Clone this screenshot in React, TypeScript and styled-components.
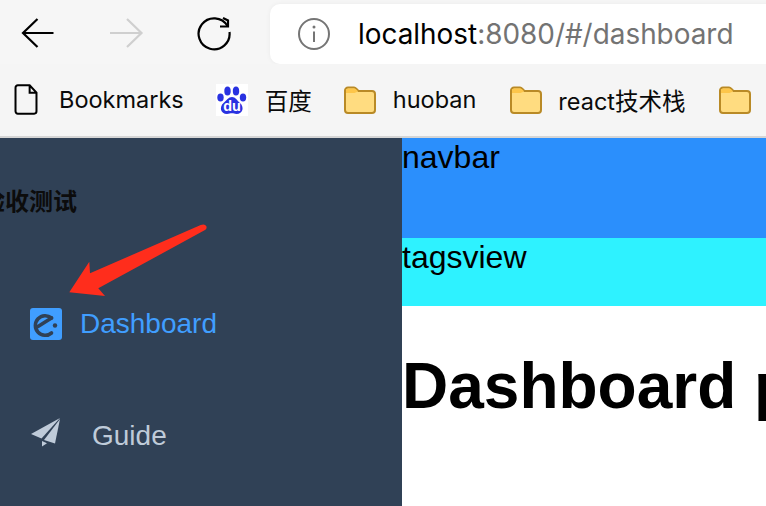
import React from 'react'
import styled, { createGlobalStyle } from 'styled-components'

const GlobalStyle = createGlobalStyle`
  html, body {
    margin: 0;
    padding: 0;
    width: 766px;
    height: 506px;
    overflow: hidden;
    background: #fff;
  }
  * {
    box-sizing: border-box;
  }
`

const Page = styled.div`
  position: relative;
  width: 766px;
  height: 506px;
  display: flex;
  flex-direction: column;
  overflow: hidden;
  font-family: 'Liberation Sans', Arial, 'Noto Sans CJK SC', sans-serif;
`

const Toolbar = styled.div`
  height: 64px;
  flex: none;
  display: flex;
  align-items: flex-start;
  padding-top: 4px;
  background: #f6f6f6;
`

const NavIcon = styled.svg<{ $left: number }>`
  flex: none;
  width: 36px;
  height: 36px;
  margin-top: 12px;
  margin-left: ${({ $left }) => $left}px;
`

const AddressBar = styled.div`
  flex: none;
  width: 520px;
  height: 60px;
  margin-left: 38px;
  display: flex;
  align-items: center;
  padding-left: 28px;
  background: #fff;
  border-radius: 10px 0 0 10px;
  box-shadow: 0 0 5px rgba(0, 0, 0, 0.05);
`

const Url = styled.span`
  margin-left: 28px;
  font-family: Inter, 'Liberation Sans', sans-serif;
  font-size: 27.9px;
  color: #000;
  white-space: nowrap;
`

const UrlMuted = styled.span`
  color: #737373;
`

const BookmarksBar = styled.div`
  height: 74px;
  flex: none;
  display: flex;
  align-items: center;
  padding: 0 0 1px 14px;
  background: #f5f5f5;
  border-bottom: 2px solid #d5d5d5;
  overflow: hidden;
`

const Bookmark = styled.div<{ $gap: number; $after: number }>`
  flex: none;
  display: flex;
  align-items: center;
  gap: ${({ $gap }) => $gap}px;
  margin-right: ${({ $after }) => $after}px;
  font-family: Inter, 'Liberation Sans', 'Noto Sans CJK SC', sans-serif;
  font-size: 23.5px;
  color: #0a0a0a;
  white-space: nowrap;
`

const Main = styled.div`
  flex: 1;
  min-height: 0;
  display: flex;
`

const Sidebar = styled.aside`
  position: relative;
  flex: none;
  width: 402px;
  display: flex;
  flex-direction: column;
  background: #304156;
  overflow: hidden;
`

const Title = styled.div`
  margin: 49px 0 0 -19px;
  font-family: 'Noto Sans CJK SC', sans-serif;
  font-size: 24px;
  line-height: 26px;
  font-weight: 700;
  color: #0c0c0c;
  white-space: nowrap;
`

const MenuItem = styled.div<{ $active?: boolean; $top: number; $gap: number }>`
  display: flex;
  align-items: center;
  gap: ${({ $gap }) => $gap}px;
  height: 34px;
  margin-top: ${({ $top }) => $top}px;
  padding-left: 30px;
  font-size: 28px;
  color: ${({ $active }) => ($active ? '#409eff' : '#bfcbd9')};
`

const Arrow = styled.svg`
  position: absolute;
  left: 66px;
  top: 84px;
  width: 144px;
  height: 76px;
`

const Content = styled.div`
  flex: 1;
  min-width: 0;
  display: flex;
  flex-direction: column;
  overflow: hidden;
`

const Navbar = styled.div`
  height: 100px;
  flex: none;
  background: #2b8ffc;
  font-size: 32px;
  line-height: 38px;
  color: #000;
`

const TagsView = styled.div`
  height: 68px;
  flex: none;
  background: #2ef2ff;
  font-size: 32px;
  line-height: 38px;
  color: #000;
`

const Heading = styled.h1`
  margin: 43px 0 0;
  font-size: 64px;
  line-height: 74px;
  font-weight: 700;
  color: #000;
  white-space: nowrap;
`

const Folder = () => (
  <svg width="32" height="28" viewBox="0 0 32 28">
    <path
      d="M1 6.5V24a3 3 0 0 0 3 3h24a3 3 0 0 0 3-3V8a3 3 0 0 0-3-3H14.5L12 2.5A3 3 0 0 0 10 1.5H4a3 3 0 0 0-3 3z"
      fill="#ffdc80"
      stroke="#b98a26"
      strokeWidth="2"
    />
    <path d="M2 7V5a2.5 2.5 0 0 1 2.5-2.5H10c1.2 0 2 .6 2.7 1.4L14 5c-1.5 1.4-3 2-5 2z" fill="#fdc64a" />
  </svg>
)

export default function App() {
  return (
    <Page>
      <GlobalStyle />
      <Toolbar>
        <NavIcon $left={20} viewBox="0 0 36 36" fill="none" stroke="#000" strokeWidth="2.2">
          <path d="M33.5 17H3M17.5 3L3 17l14.5 14" />
        </NavIcon>
        <NavIcon $left={52} viewBox="0 0 36 36" fill="none" stroke="#cfcfcf" strokeWidth="2.2">
          <path d="M2 17h32M19 3l14.5 14L19 31" />
        </NavIcon>
        <NavIcon $left={52} viewBox="0 0 36 36" fill="none" stroke="#000" strokeWidth="2.2">
          <path d="M31.5 10A15.5 15.5 0 1 0 33.5 16" />
          <path d="M27 2l5 2.5V10.5H24" />
        </NavIcon>
        <AddressBar>
          <svg width="32" height="32" viewBox="0 0 32 32" fill="none">
            <circle cx="16" cy="16" r="15" stroke="#757575" strokeWidth="2" />
            <path d="M16 13.5V24" stroke="#757575" strokeWidth="2" />
            <circle cx="16" cy="9" r="1.5" fill="#757575" />
          </svg>
          <Url>
            localhost<UrlMuted>:8080/#/dashboard</UrlMuted>
          </Url>
        </AddressBar>
      </Toolbar>
      <BookmarksBar>
        <Bookmark $gap={21} $after={32}>
          <svg width="24" height="31" viewBox="0 0 26 34" fill="none" stroke="#000" strokeWidth="2.2">
            <path d="M4 1.5h13l7.5 8V30a2.5 2.5 0 0 1-2.5 2.5H4A2.5 2.5 0 0 1 1.5 30V4A2.5 2.5 0 0 1 4 1.5zM17 1.5v8h7.5" />
          </svg>
          Bookmarks
        </Bookmark>
        <Bookmark $gap={17} $after={32}>
          <svg width="32" height="32" viewBox="0 0 32 32">
            <rect width="32" height="32" fill="#fff" />
            <g fill="#2932e1">
              <ellipse cx="4.5" cy="13.5" rx="3.2" ry="4" />
              <ellipse cx="11.5" cy="7" rx="3.2" ry="4.5" />
              <ellipse cx="20" cy="7" rx="3.2" ry="4.5" />
              <ellipse cx="27" cy="13.5" rx="3.2" ry="4" />
              <path d="M16 13c3.5 0 5 3.5 8 6 4.5 4 3 11-3.5 11-2 0-2.8-.7-4.5-.7S13 30 11 30C4.5 30 3 23 7.5 19c3-2.5 5-6 8.5-6z" />
            </g>
            <text x="16" y="27" textAnchor="middle" fontFamily="'Liberation Sans', sans-serif" fontSize="14.5" fontWeight="700" fill="#fff">
              du
            </text>
          </svg>
          百度
        </Bookmark>
        <Bookmark $gap={17} $after={34}>
          <Folder />
          huoban
        </Bookmark>
        <Bookmark $gap={16} $after={33}>
          <Folder />
          react技术栈
        </Bookmark>
        <Bookmark $gap={0} $after={0}>
          <Folder />
        </Bookmark>
      </BookmarksBar>
      <Main>
        <Sidebar>
          <Title>验收测试</Title>
          <MenuItem $active $top={94} $gap={18}>
            <svg width="32" height="32" viewBox="0 0 32 32">
              <rect width="32" height="32" rx="3" fill="#409eff" />
              <path
                d="M21.5 10A9.8 9.8 0 1 0 21.5 25"
                fill="none"
                stroke="#304156"
                strokeWidth="3.6"
                strokeLinecap="round"
              />
              <path d="M8 18.5L21.5 10" stroke="#304156" strokeWidth="3.6" strokeLinecap="round" />
              <circle cx="25" cy="17.5" r="2.2" fill="#304156" />
            </svg>
            Dashboard
          </MenuItem>
          <MenuItem $top={78} $gap={30}>
            <svg width="32" height="36" viewBox="0 0 32 36" fill="#bfcbd9">
              <path d="M30 0L1 16l10.5 4.5z" />
              <path d="M30 1L14 22l11 3.5z" />
              <path d="M12 23v5.5l5-3.2z" />
            </svg>
            Guide
          </MenuItem>
          <Arrow viewBox="0 0 144 76">
            <path
              d="M3.3 70.3L23.3 39.7L24 51.3L134.7 3Q139 1.5 140.5 4.5Q141 7 139 8L32.3 66.3L39 74Z"
              fill="#ff2d1c"
            />
          </Arrow>
        </Sidebar>
        <Content>
          <Navbar>navbar</Navbar>
          <TagsView>tagsview</TagsView>
          <Heading>Dashboard page</Heading>
        </Content>
      </Main>
    </Page>
  )
}
